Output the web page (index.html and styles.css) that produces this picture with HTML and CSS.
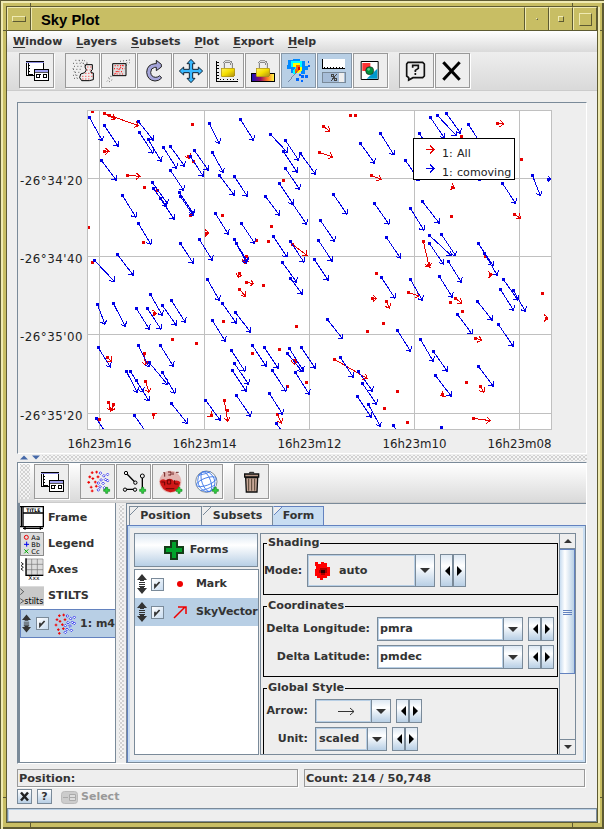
FILE: index.html
```html
<!DOCTYPE html>
<html lang="en">
<head>
<meta charset="utf-8">
<title>Sky Plot</title>
<link rel="stylesheet" href="styles.css">
</head>
<body>
<svg class="defs" width="0" height="0" aria-hidden="true">
  <defs>
    <linearGradient id="gold" x1="0" y1="0" x2="1" y2="1"><stop offset="0" stop-color="#fff36a"/><stop offset=".5" stop-color="#f5df00"/><stop offset="1" stop-color="#a98a18"/></linearGradient>
    <linearGradient id="plasma"><stop offset="0" stop-color="#1010c0"/><stop offset=".4" stop-color="#901060"/><stop offset=".7" stop-color="#ff7a20"/><stop offset="1" stop-color="#ffff50"/></linearGradient>
    <symbol id="windows" viewBox="60 162 99 99">
      <path d="M79 185h51v41H79z" fill="#fff" stroke="#000" stroke-width="3"/>
      <path d="M78 184h54v6H78z" fill="#8f8fe0"/><path d="M78 184h54M85 190v33M85 222h15M85 196h4m-4 9h4m-4 9h4" stroke="#000" stroke-width="3" fill="none"/>
      <path d="M103 208h42v33h-42z" fill="#fff" stroke="#000" stroke-width="4"/>
      <path d="M105 210h39v5h-39z" fill="#a0a0f0"/><path d="M104 216h41" stroke="#000" stroke-width="2"/>
      <path d="M110 224h8v8h-8zM130 224h9v9h-9z" fill="none" stroke="#000" stroke-width="3"/><path d="M120 224h3" stroke="#000" stroke-width="3"/>
    </symbol>
    <symbol id="padlock" viewBox="0 0 48 52">
      <path d="M11 26V14Q11 3 23 3t12 11v12" fill="none" stroke="#888" stroke-width="7"/><path d="M11 26V14Q11 3 23 3t12 11v12" fill="none" stroke="#ddd" stroke-width="3"/>
      <rect x="3" y="23" width="41" height="26" rx="4" fill="url(#gold)" stroke="#a88b20" stroke-width="2"/>
    </symbol>
    <symbol id="scatter" viewBox="0 0 66 66">
      <path d="M5 20h8m-4-4v8M12 8h8m-4-4v8M25 6h8m-4-4v8M2 36h8m-4-4v8M14 25h8m-4-4v8M29 20h8m-4-4v8M9 50h8m-4-4v8M21 35h8m-4-4v8M24 47h8m-4-4v8M12 61h8m-4-4v8" stroke="#f00000" stroke-width="3"/>
      <path d="M40 5l4 4-4 4-4-4zM50 13l4 4-4 4-4-4zM61 9l4 4-4 4-4-4zM42 25l4 4-4 4-4-4zM55 24l4 4-4 4-4-4zM34 34l4 4-4 4-4-4zM48 35l4 4-4 4-4-4zM61 27l4 4-4 4-4-4zM39 45l4 4-4 4-4-4zM52 48l4 4-4 4-4-4zM34 54l4 4-4 4-4-4z" fill="#fff" stroke="#00e" stroke-width="2"/>
    </symbol>
    <symbol id="plus" viewBox="0 0 24 24"><path d="M9 3h6v6h6v6h-6v6H9v-6H3V9h6z" fill="#30d040" stroke="#108820" stroke-width="2"/></symbol>
    <symbol id="updown" viewBox="0 0 10 20"><path d="M5 0l5 6H7v1H3V6H0zM5 20l5-6H7v-1H3v1H0zM2 8h6v1H2zM2 10h6v1H2zM2 12h6v1H2z" fill="#333"/></symbol>
    <symbol id="tick" viewBox="0 0 13 13"><path d="M3.500 5.500v4l5.500-6" fill="none" stroke="#333" stroke-width="2"/></symbol>
  </defs>
</svg>

<div class="window">
  <header class="titlebar">
    <span class="knob menu-knob"><i></i></span>
    <h1>Sky Plot</h1>
    <span class="knob"><i class="dot"></i></span>
    <span class="knob"><i class="small"></i></span>
    <span class="knob last"><i class="large"></i></span>
  </header>
  <main class="client">
    <nav class="menubar">
      <span><u>W</u>indow</span><span><u>L</u>ayers</span><span><u>S</u>ubsets</span><span><u>P</u>lot</span><span><u>E</u>xport</span><span><u>H</u>elp</span>
    </nav>
    <div class="toolbar">
      <button class="tool"><svg><use href="#windows"/></svg></button>
      <button class="tool gap"><svg class="fine" viewBox="198 162 99 99">
        <path d="M226 181h30M219 190h45M222 199h24M219 208h24M225 217h15M219 226h15M222 235h12M237 181l18 15M252 181l12 9M219 205l12 30" stroke="#444" stroke-width="2.500" stroke-dasharray="3 7" fill="none"/>
        <path d="M257 194h20v15l-4 4v5l7 1v20l-12 3h-23l-6-9 3-11 12-4 5-8-4-9z" fill="#eee" stroke="#000" stroke-width="3"/>
        <path d="M262 201h12M260 210h12M256 220h20M247 229h30M247 237h27" stroke="#f22" stroke-width="3" stroke-dasharray="3 6"/></svg></button>
      <button class="tool"><svg class="fine" viewBox="306 162 99 99">
        <path d="M321 244l24-24M324 235l18-15M360 184l30-4M370 190l20-2M378 196l9-3M327 246l12-9" stroke="#444" stroke-width="2.500" stroke-dasharray="3 6"/><path d="M338 191h40v36h-40z" fill="#ddd" stroke="#000" stroke-width="3"/>
        <path d="M344 197h30M342 206h33M347 215h24M342 222h27M368 195l-22 27" stroke="#f22" stroke-width="3.500" stroke-dasharray="3 5"/></svg></button>
      <button class="tool"><svg class="fine" viewBox="414 162 99 99"><path d="M469 181l15 12v8l-15 11v-10h-5q-12 2-12 15 1 14 15 15 7 0 12-5l6 7q-8 9-20 9-23-2-25-26 1-24 25-26h4z" fill="#a5a5da" stroke="#222" stroke-width="3"/></svg></button>
      <button class="tool"><svg class="fine" viewBox="522 162 99 99"><path d="M573 178l12 13h-7v17h17v-7l13 12-13 12v-7h-17v17h7l-12 13-12-13h7v-17h-17v7l-13-12 13-12v7h17v-17h-7z" fill="#39b9ff" stroke="#123" stroke-width="3"/></svg></button>
      <button class="tool"><svg viewBox="630 162 99 99"><path d="M650 183v61M648 243h66" stroke="#000" stroke-width="3"/><path d="M653 185v54" stroke="#000" stroke-width="5" stroke-dasharray="3 7"/><path d="M660 239h54" stroke="#000" stroke-width="4" stroke-dasharray="3 7"/><use href="#padlock" x="660" y="181" width="48" height="52"/></svg></button>
      <button class="tool"><svg viewBox="738 162 99 99"><path d="M754 220h69v24h-69z" fill="url(#plasma)" stroke="#000" stroke-width="3"/><use href="#padlock" x="765" y="181" width="48" height="52"/></svg></button>
      <button class="tool on"><svg viewBox="846 162 99 99"><path d="M864 181h15v-3h21v6h15v15h9v12h-8v12h-12v-9h-13l-18 6v-12h-12z" fill="#08f"/><path d="M873 184h33v21l-12 14-14 4v-12l6-9h-13z" fill="#0ff"/><path d="M880 189h20v11h7v12l-14 8-5-7 4-12h-12z" fill="#ff0"/><path d="M888 194h13v15l-10 9h-7v-8l6-5z" fill="#f60"/><path d="M893 200h8v9h-8z" fill="#d00"/><path d="M891 214l-27 33M903 225h9v9h-9zM888 234h9v9h-9zM914 226h9v9h-9zM897 222h6v6h-6zM903 240h6v6h-6zM924 195h6v6h-6zM924 183h4v6h-4z" fill="#06f"/><path d="M891 214l-27 33" stroke="#568" stroke-width="2"/></svg></button>
      <button class="tool on"><svg viewBox="954 162 99 99"><path d="M966 177h70v30h-70z" fill="#fff"/><path d="M967 177v28h69M974 202v3m9-3v3m9-3v3m9-3v3m9-3v3m9-3v3m9-3v3" stroke="#000" stroke-width="3" fill="none"/><path d="M967 217h68v31h-68z" fill="#a6bdd8" stroke="#7a8a99" stroke-width="3"/><path d="M1016 219h17v27h-17z" fill="#eee"/><path d="M1011 222l-19 22" stroke="#444" stroke-width="3"/><path d="M993 223h6v6h-6zM1004 236h6v6h-6z" fill="none" stroke="#444" stroke-width="3"/></svg></button>
      <button class="tool"><svg class="fine" viewBox="1062 162 99 99"><path d="M1083.500 184.500h51v54h-51z" fill="#fff" stroke="#000" stroke-width="3"/><path d="M1087 189h24v24h-24z" fill="#f33"/><path d="M1132 206v30h-32z" fill="#09c"/><circle cx="1109" cy="212" r="12" fill="#00913b" stroke="#222" stroke-width="2"/><circle cx="1106" cy="208" r="4" fill="#6c8"/></svg></button>
      <button class="tool gap2"><svg class="fine" viewBox="1200 162 99 99"><path d="M1224 187h44l5 5v36l-5 5h-29l-13 7v-7l-6-5v-36z" fill="#eee" stroke="#111" stroke-width="5"/><path d="M1238 203v-7h17v9l-9 6v5M1246 219v6" fill="none" stroke="#111" stroke-width="5"/></svg></button>
      <button class="tool"><svg class="fine" viewBox="1308 162 99 99"><path d="M1333 190l43 46M1376 190l-43 46" stroke="#000" stroke-width="9" stroke-linecap="square"/></svg></button>
    </div>

    <section class="plot">
      <svg id="sky" width="569" height="350" viewBox="18 103 569 350">
        <rect x="87" y="110" width="465" height="320" fill="#fff"/>
        <g id="grid"></g>
        <clipPath id="frame"><rect x="88" y="111" width="463" height="318"/></clipPath>
        <g id="vectors" clip-path="url(#frame)"></g>
        <g class="axis end"><text x="83" y="185">-26°34'20</text><text x="83" y="263">-26°34'40</text><text x="83" y="341">-26°35'00</text><text x="83" y="420">-26°35'20</text></g>
        <g class="axis mid"><text x="99.500" y="448">16h23m16</text><text x="204.500" y="448">16h23m14</text><text x="309.500" y="448">16h23m12</text><text x="414.500" y="448">16h23m10</text><text x="519.500" y="448">16h23m08</text></g>
        <g class="legend">
          <rect x="413.500" y="138.500" width="101" height="41" fill="#fff" stroke="#000"/>
          <path class="all" d="M426 149.500h8m-4-4l4 4-4 4"/><path class="co" d="M426 168.500h8m-4-4l4 4-4 4"/>
          <text x="442" y="157">1:</text><text x="457" y="157">All</text><text x="442" y="176">1:</text><text x="457" y="176">comoving</text>
        </g>
      </svg>
    </section>

    <div class="divider"><svg width="20" height="5" viewBox="0 0 20 5"><path d="M0 4.500l4-4 4 4zM12 .5h8l-4 4z" fill="#4568a8"/></svg><i class="bumps"></i></div>

    <section class="lower">
      <div class="toolbar second">
        <i class="bumps grip"></i>
        <button class="tool"><svg><use href="#windows"/></svg></button>
        <button class="tool gap"><svg class="fine" viewBox="243 105 99 99"><use href="#scatter" x="260" y="120" width="68" height="68"/><use href="#plus" x="308" y="169" width="24" height="24"/></svg></button>
        <button class="tool"><svg class="fine" viewBox="351 105 99 99"><path d="M378 129l27 28M427 140v36M377 178h27" stroke="#000" stroke-width="4"/><g fill="#eee" stroke="#000" stroke-width="3"><circle cx="378" cy="129" r="5"/><circle cx="406" cy="158" r="5"/><circle cx="427" cy="138" r="6"/><circle cx="375" cy="179" r="5"/><circle cx="405" cy="179" r="5"/></g><use href="#plus" x="416" y="169" width="24" height="24"/></svg></button>
        <button class="tool"><svg class="fine" viewBox="459 105 99 99"><circle cx="511" cy="155" r="33" fill="#e3b4b0"/><path d="M479 154q8-10 18-3 14-10 25 2 12-5 19 4-4 29-30 30-27-5-32-33z" fill="#d01818"/><path d="M490 128h4v12m10-14h9v9h-8m14-8v8m9-8h8M484 156h10v10m8-16h10v12h-10zM524 150v12h11M497 176h26" stroke="#500" fill="none" stroke-width="2.500"/><use href="#plus" x="525" y="169" width="24" height="24"/></svg></button>
        <button class="tool"><svg class="fine" viewBox="567 105 99 99"><circle cx="619" cy="155" r="32" fill="#fff" stroke="#678" stroke-width="2.500"/><g fill="none" stroke="#3b75e8" stroke-width="2.500"><ellipse cx="619" cy="155" rx="13" ry="31" transform="rotate(-20 619 155)"/><ellipse cx="619" cy="155" rx="25" ry="31" transform="rotate(-20 619 155)"/><ellipse cx="619" cy="155" rx="31" ry="11" transform="rotate(-20 619 155)"/><path d="M595 136q22-4 37-11M602 182q22-4 43-17"/></g><use href="#plus" x="634" y="169" width="24" height="24"/></svg></button>
        <button class="tool gap"><svg class="fine" viewBox="705 105 99 99"><path d="M734 132h42v9h-42z" fill="#b49584" stroke="#111" stroke-width="4"/><path d="M749 130v-3h12v3" fill="none" stroke="#111" stroke-width="3"/><path d="M737 143h36l-2 43h-32z" fill="#c6a797" stroke="#111" stroke-width="4"/><path d="M746 146v36m9-36v36m9-36v36" stroke="#543" stroke-width="3"/></svg></button>
      </div>
      <div class="workspace">
        <ul class="layers">
          <li><svg width="24" height="24" viewBox="0 0 72 72"><path d="M9 2h61v60H9zM9 21h61M4 2v60M0 2h9M0 62h9M9 67h60M15 64v7m46-7v7" fill="#fff" stroke="#000" stroke-width="4"/><text x="40" y="17" class="tiny-title">TITLE</text></svg>Frame</li>
          <li><svg width="24" height="24" viewBox="0 0 72 72"><path d="M1 1h70v70H1z" fill="#ddd" stroke="#777" stroke-width="3"/><circle cx="19" cy="16" r="6" fill="none" stroke="#e00" stroke-width="3"/><path d="M12 37h15m-7-8v15" stroke="#00e" stroke-width="3"/><path d="M13 52l12 12m0-12L13 64" stroke="#0a0" stroke-width="3"/><g class="tiny"><text x="34" y="24">Aa</text><text x="34" y="45">Bb</text><text x="34" y="66">Cc</text></g></svg>Legend</li>
          <li><svg width="24" height="24" viewBox="0 0 72 72"><path d="M20 4h48v46H20z" fill="#ddd"/><path d="M19 3v48h50V3zM19 19h50M19 35h50M35 3v48M52 3v48" fill="none" stroke="#777" stroke-width="2"/><path d="M18 1v51h52" fill="none" stroke="#000" stroke-width="4"/><path d="M3 13l7 5-7 5 7 5-7 5 7 5" stroke="#222" stroke-width="3" fill="none"/><text x="25" y="67" class="tiny xs">Xxx</text></svg>Axes</li>
          <li><svg width="24" height="24" viewBox="0 0 72 72"><path d="M0 7h72v58H0z" fill="#c9c9c9"/><path d="M1 14l10 9-10 9M1 44l10 7-10 7" stroke="#222" stroke-width="2" fill="none"/><text x="13" y="59" class="stilts">stilts</text></svg>STILTS</li>
          <li class="sel"><svg width="9" height="19"><use href="#updown"/></svg><span class="check"><svg><use href="#tick"/></svg></span><svg width="22" height="22"><use href="#scatter"/></svg><span>1: m4</span></li>
        </ul>
        <div class="vdivider"><i class="bumps"></i></div>
        <div class="tabs">
          <div class="tabstrip"><span class="tab t1">Position</span><span class="tab t2">Subsets</span><span class="tab t3 active">Form</span></div>
          <div class="pane">
            <div class="forms">
              <button class="add"><svg width="20" height="20" viewBox="0 0 20 20"><path d="M7 1h6v6h6v6h-6v6H7v-6H1V7h6z" fill="#00a32a" stroke="#143d18" stroke-width="2"/></svg>Forms</button>
              <ul class="formlist">
                <li><svg width="10" height="20"><use href="#updown"/></svg><span class="check"><svg><use href="#tick"/></svg></span><svg width="14" height="14" viewBox="0 0 14 14"><circle cx="7" cy="7" r="3" fill="#e00"/></svg><b>Mark</b></li>
                <li class="sel"><svg width="10" height="20"><use href="#updown"/></svg><span class="check"><svg><use href="#tick"/></svg></span><svg width="14" height="14" viewBox="0 0 14 14"><path d="M1 13L12 2M5 2h8v7" fill="none" stroke="#e00" stroke-width="1.500"/></svg><b>SkyVector</b></li>
              </ul>
            </div>
            <div class="scroll">
              <div class="groups">
                <fieldset class="shading"><legend>Shading</legend>
                  <div class="row"><label>Mode:</label><span class="combo tall" id="mode"><em><svg width="16" height="20" viewBox="0 0 16 20"><path d="M0 1h3v2h3V1h3v1h3v4h3v9h-3v2H8v2H5v-2H2v-2H0V8h1V5H0z" fill="#f00"/><path d="M5 7h7v5h-2v2H6v-2H4V9h1z" fill="#a00"/><path d="M6 9h4v3H6z" fill="#300"/></svg>auto</em></span><span class="spin tall"></span></div>
                </fieldset>
                <fieldset class="coords"><legend>Coordinates</legend>
                  <div class="row"><label>Delta Longitude:</label><span class="combo edit"><em>pmra</em></span><span class="spin"></span></div>
                  <div class="row"><label>Delta Latitude:</label><span class="combo edit"><em>pmdec</em></span><span class="spin"></span></div>
                </fieldset>
                <fieldset class="global"><legend>Global Style</legend>
                  <div class="row"><label>Arrow:</label><span class="combo arrow"><em><svg width="17" height="9" viewBox="0 0 17 9"><path d="M0 4.500h16M12 1l4 3.500L12 8" fill="none" stroke="#333"/></svg></em></span><span class="spin"></span></div>
                  <div class="row"><label>Unit:</label><span class="combo unit"><em>scaled</em></span><span class="spin"></span></div>
                </fieldset>
              </div>
              <div class="bar"><i class="cap up"></i><i class="thumb"></i><i class="track"></i><i class="cap down"></i></div>
            </div>
          </div>
        </div>
      </div>
    </section>

    <div class="status"><span>Position:</span><span>Count: 214 / 50,748</span></div>
    <div class="actions">
      <button><svg width="13" height="13" viewBox="0 0 13 13"><path d="M3 2.500l7 8M10 2.500l-7 8" stroke="#222" stroke-width="2.500"/></svg></button>
      <button>?</button>
      <span class="select"><svg width="17" height="13" viewBox="0 0 17 13"><rect x=".5" y=".5" width="16" height="12" rx="3" fill="#ccc" stroke="#bbb"/><path d="M2 6.500h5M8.500 3.500h6v6h-6zM8 6.500h6" stroke="#aaa" fill="#ddd"/></svg>Select</span>
    </div>
    <div class="progress"></div>
  </main>
</div>
<script src="plot.js"></script>
</body>
</html>
```
FILE: styles.css
```css
* { box-sizing: border-box; }
body { margin: 0; background: #5d5a32; color: #333; font: bold 11px/14px "DejaVu Sans", sans-serif; }
button { font: inherit; color: inherit; padding: 0; margin: 0; border-radius: 0; }
ul { list-style: none; margin: 0; padding: 0; }
svg { display: block; flex: none; }
.defs { position: absolute; }

.window {
  width: 604px; height: 829px; padding: 7px;
  background:
    linear-gradient(#5d5a32, #5d5a32) 30px 0/1px 6px no-repeat,
    linear-gradient(#5d5a32, #5d5a32) 572px 0/1px 6px no-repeat,
    linear-gradient(#5d5a32, #5d5a32) 0 30px/6px 1px no-repeat,
    linear-gradient(#5d5a32, #5d5a32) 598px 30px/5px 1px no-repeat,
    linear-gradient(#5d5a32, #5d5a32) 0 797px/6px 1px no-repeat,
    linear-gradient(#5d5a32, #5d5a32) 598px 797px/5px 1px no-repeat,
    linear-gradient(#5d5a32, #5d5a32) 30px 823px/1px 5px no-repeat,
    linear-gradient(#5d5a32, #5d5a32) 572px 823px/1px 5px no-repeat,
    #c8be64;
  box-shadow: inset 1px 1px #5d5a32, inset 3px 3px #efeab2, inset -2px -2px #5d5a32;
}
.titlebar { display: flex; width: 590px; height: 24px; background: #c8be64; box-shadow: 0 0 0 1px #5d5a32; position: relative; }
.titlebar::before { content: ""; position: absolute; inset: 0 -3px -792px 0; border: solid #efeab2; border-width: 0 2px 2px 0; pointer-events: none; }
.knob { width: 24px; height: 24px; display: flex; align-items: center; justify-content: center; border: 1px solid; border-color: #efeab2 #5d5a32 #5d5a32 #efeab2; }
.knob i { width: 13px; height: 13px; border: 1px solid; border-color: #efeab2 #5d5a32 #5d5a32 #efeab2; }
.menu-knob i { height: 6px; width: 14px; }
.knob i.dot { width: 2px; height: 2px; }
.knob i.small { width: 6px; height: 6px; }
.titlebar h1 { flex: 1; margin: 0; padding-left: 9px; border: 1px solid; border-color: #efeab2 #5d5a32 #5d5a32 #efeab2; font: bold 14.8px/24px "Liberation Sans", sans-serif; color: #000; }

.client { position: relative; width: 590px; height: 791px; background: #eee; box-shadow: 0 0 0 1px #5d5a32; display: flex; flex-direction: column; }
.menubar { display: flex; flex: none; gap: 14px; height: 21px; padding: 4px 0 0 6px; background: linear-gradient(#fff, #dadada); }
.menubar u { text-underline-offset: 2px; }
.toolbar { display: flex; flex: none; gap: 1px; height: 39px; padding: 1px 0 0 12px; background: linear-gradient(#eee, #dadada 96%); border-bottom: 1px solid #ccc; }
.tool { width: 35px; height: 35px; flex: none; border: 1px solid #999; background: #eee; box-shadow: 1px 1px #fff; }
.tool svg { width: 33px; height: 33px; shape-rendering: crispEdges; }
.tool svg.fine { shape-rendering: auto; }
.tool.gap, .tool.gap2 { margin-left: 10px; }
.tool.on { background: #b8cfe5; border-color: #8797a7; }

.plot { flex: none; margin: 11px 10px 0; width: 570px; height: 352px; border: 1px solid #7a8a99; border-right-color: #fff; border-bottom-color: #fff; }
#sky { shape-rendering: crispEdges; }
#grid path { stroke: #c0c0c0; fill: none; }
#vectors .v, .all, .co { fill: none; }
.all, #vectors .v.r { stroke: #e60000; }
.co, #vectors .v.b { stroke: #0000e6; }
#vectors rect.r { fill: #e60000; }
#vectors rect.b { fill: #0000e6; }
.axis, .legend text { font-weight: normal; fill: #222; }
.axis { font-size: 11.8px; }
.legend text { font-size: 11.1px; }
.end { text-anchor: end; letter-spacing: .5px; }
.mid { text-anchor: middle; }

.bumps { display: block; background: radial-gradient(circle, #aaa .6px, transparent .8px) 0 0/4px 4px, radial-gradient(circle, #aaa .6px, transparent .8px) 2px 2px/4px 4px, #f4f4f4; }
.divider { display: flex; flex: none; height: 8px; margin: 0 10px; padding: 1px 0 0 3px; gap: 2px; }
.divider .bumps { flex: 1; height: 6px; }

.lower { flex: none; margin: 0 10px 0; width: 570px; height: 302px; border: 1px solid #7a8a99; border-right-color: #fff; border-bottom-color: #fff; }
.toolbar.second { height: 40px; padding: 1px 0 0 2px; background: linear-gradient(#fff, #dadada); }
.grip { width: 10px; height: 35px; margin-right: 3px; }
.workspace { display: flex; height: 260px; }
.layers { width: 98px; height: 260px; background: #fff; border-left: 2px solid #7a8a99; border-right: 1px solid #7a8a99; border-bottom: 1px solid #7a8a99; padding-top: 2px; overflow: hidden; }
.layers li { display: flex; align-items: center; height: 26px; gap: 4px; font-size: 11.2px; white-space: nowrap; }
.layers li.sel { height: 29px; background: #b8cfe5; border: 1px solid #6382bf; border-right: 0; padding-left: 1px; font-size: 11px; }
.tiny-title { font-size: 14px; text-anchor: middle; fill: #000; }
.tiny { font-size: 20px; font-weight: normal; fill: #000; }
.tiny.xs { font-size: 18px; }
.stilts { font-size: 24px; font-weight: normal; fill: #000; }
.check { width: 13px; height: 13px; flex: none; border: 1px solid #7a8a99; background: linear-gradient(135deg, #fff, #c8dcf0); }
.check svg { width: 11px; height: 11px; }
.layers .check { margin-left: 1px; }
.layers .check + svg { margin-left: 1px; }
.vdivider { width: 10px; padding: 2px 2px 4px 3px; }
.vdivider .bumps { height: 254px; }
.tabs { flex: 1; height: 260px; border-left: 1px solid #7a8a99; border-top: 1px solid #7a8a99; }
.tabstrip { display: flex; height: 21px; padding: 2px 0 0 2px; }
.tab { height: 19px; padding: 1px 0 0; text-align: center; font-size: 11px; line-height: 16px; background: linear-gradient(135deg, #eee 5px, #7a8a99 5px, #7a8a99 6px, transparent 6px); border: 1px solid #7a8a99; border-bottom: 0; border-left-color: transparent; }
.t1 { width: 73px; border-left-color: #7a8a99; }
.t2 { width: 71px; }
.t3 { width: 51px; }
.tab.active { background: linear-gradient(135deg, #eee 5px, #6382bf 5px, #6382bf 6px, #c8ddf2 6px); border-color: #6382bf #6382bf #c8ddf2 #c8ddf2; }
.pane { display: flex; gap: 1px; height: 238px; padding: 5px 5px 6px 6px; border: 1px solid #6382bf; border-right-color: #7a8a99; border-bottom-color: #7a8a99; box-shadow: inset 0 0 0 2px #c8ddf2; }
.forms { width: 125px; flex: none; padding-top: 2px; }
.add { width: 124px; height: 34px; display: flex; align-items: center; justify-content: center; gap: 6px; border: 1px solid #7a8a99; background: linear-gradient(#dde8f3, #fff 35%, #b8cfe5); font-size: 11.2px; }
.formlist { margin-top: 2px; width: 125px; height: 186px; background: #fff; border: 1px solid #7a8a99; }
.formlist li { display: flex; align-items: center; height: 28px; padding-left: 2px; font-size: 11px; white-space: nowrap; overflow: hidden; }
.formlist .check { margin: 0 9px 0 4px; }
.formlist b { margin-left: 9px; letter-spacing: -.1px; }
.sel { background: #b8cfe5; }
.scroll { display: flex; width: 316px; height: 222px; margin-top: 2px; border: 1px solid #7a8a99; overflow: hidden; }
.groups { width: 298px; height: 220px; overflow: hidden; flex: none; padding: 2px 1px 0 2px; }
fieldset { margin: 0; min-width: 0; width: 295px; border: 1px solid #000; padding: 0; }
legend { padding: 0 1px; margin-left: 3px; height: 14px; line-height: 14px; font-size: 11.2px; }
.shading { height: 59px; }
.coords { height: 78px; margin-top: 4px; }
.global { height: 80px; margin-top: 4px; }
.row { display: flex; align-items: center; height: 24px; margin-bottom: 4px; }
.shading .row { height: 33px; margin-top: 4px; }
.coords .row:first-of-type, .global .row:first-of-type { margin-top: 4px; }
.row label { text-align: right; padding-right: 7px; white-space: nowrap; }
.shading label { width: 43px; padding-right: 6px; }
.coords label { width: 113px; }
.global label { width: 51px; }
.combo { height: 24px; flex: none; border: 1px solid #7a8a99; background: linear-gradient(#dde8f3, #fff 35%, #b8cfe5); display: flex; }
.combo em { font-style: normal; display: flex; align-items: center; height: 100%; width: calc(100% - 19px); border: 1px solid #b8cfe5; background: #eee; box-shadow: 1px 0 #7a8a99; padding-left: 2px; font-size: 11.2px; }
.combo::after { content: ""; margin: auto; border: solid transparent; border-width: 5px 5px 0; border-top-color: #333; }
.edit { width: 146px; }
.edit em { background: #fff; padding-left: 1px; }
#mode { width: 128px; }
#mode em { padding-left: 6px; gap: 8px; }
.arrow { width: 76px; }
.arrow em { padding-left: 21px; }
.unit { width: 72px; }
.tall { height: 33px !important; }
.spin { display: flex; justify-content: space-around; align-items: center; width: 26px; height: 24px; margin-left: 5px; border: 1px solid #7a8a99; background: linear-gradient(90deg, transparent 11px, #7a8a99 11px, #7a8a99 13px, transparent 13px), linear-gradient(#dde8f3, #fff 35%, #b8cfe5); }
.spin::before, .spin::after { content: ""; border: solid transparent; border-width: 5px 5px 5px 0; border-right-color: #000; }
.spin::after { border-width: 5px 0 5px 5px; border-left-color: #000; }
.bar { width: 16px; height: 220px; border-left: 1px solid #7a8a99; display: flex; flex-direction: column; }
.cap { height: 15px; display: flex; background: #eee; border-bottom: 1px solid #7a8a99; }
.cap::after { content: ""; margin: auto; border: solid transparent; border-width: 0 4px 4px; border-bottom-color: #333; }
.cap.down { border: 0; border-top: 1px solid #7a8a99; }
.cap.down::after { border-width: 4px 4px 0; border-top-color: #333; }
.thumb { height: 125px; border: 1px solid #6382bf; border-left: 0; background: linear-gradient(#6382bf, #6382bf) 3px 60px/9px 1px no-repeat, linear-gradient(#6382bf, #6382bf) 3px 62px/9px 1px no-repeat, linear-gradient(#6382bf, #6382bf) 3px 64px/9px 1px no-repeat, linear-gradient(90deg, #c8dcf0, #fff 35%, #b8cfe5); }
.track { flex: 1; }

.status { display: flex; flex: none; gap: 6px; margin: 5px 10px 0; height: 18px; }
.status span { width: 281px; border: 1px solid #999; box-shadow: 1px 1px #fff; padding: 1px 0 0 1px; font-size: 11.3px; line-height: 15px; }
.actions { display: flex; flex: none; margin: 2px 10px 0; height: 15px; align-items: center; gap: 5px; }
.actions button { width: 15px; height: 15px; border: 1px solid #7a8a99; background: linear-gradient(#fff, #b8cfe5); line-height: 13px; }
.select { display: flex; align-items: center; gap: 3px; margin-left: 4px; padding-top: 1px; color: #999; font-size: 11px; }
.progress { flex: none; height: 14px; margin-top: 4px; border: 1px solid #7a8a99; box-shadow: inset 1px 1px #b8cfe5; }
```
FILE: plot.js
```js
// Sky vectors, stored per tile in thirds of a pixel: [x1, y1, x2, y2]; [x, y] is a bare point.
const tiles = [
  { at: [80, 100],
    b: [[28,52,67,122],[73,76,115,139],[64,181,109,241],[175,64,220,121],[178,97,219,160],[205,119,244,184],[250,142,290,205],[271,139,314,199],[331,169,370,229],[343,151,385,211],[271,211,311,271],[217,247,263,312],[220,265,260,320],[241,295,283,358],[298,277,341,342],[301,289,341,348],[127,286,168,352],[175,370,213,433],[301,430,340,490],[358,418,397,481],[112,463,160,526],[43,481,103,544],[388,70,418,130],[397,157,430,217],[418,226,463,286],[406,340,445,403]],
    r: [[88,46,175,77],[73,40,106,57],[73,154,87,154],[142,226,180,229],[37,33],[193,262],[337,73],[325,169,328,175],[340,184],[331,346],[232,271],[190,427],[427,346],[25,382],[37,487],[379,399,387,399]] },
  { at: [230, 100],
    b: [[31,58,71,121],[121,103,172,157],[166,121,206,181],[160,154,202,217],[211,160,257,223],[166,205,209,268],[13,229,52,289],[148,250,189,312],[187,310,230,373],[106,289,149,346],[34,370,74,430],[13,418,50,490],[19,430,53,485],[130,409,171,471],[181,424,222,487],[157,487,200,547],[253,478,295,541],[271,361,314,424],[265,421,307,484],[310,283,351,343],[391,130,434,190],[451,100,492,165],[433,310,477,373],[469,412,511,474],[181,535,217,583]],
    r: [[361,46],[376,46],[160,241],[124,379],[115,424],[79,421],[280,79,299,94],[268,157,308,171],[424,226,453,238],[187,433,231,466],[49,470,43,492]] },
  { at: [390, 100],
    b: [[121,52,163,114],[142,46,199,107],[169,40,212,100],[235,73,275,135],[88,100,130,165],[46,181,89,243],[268,238],[337,250,377,310],[427,226,451,287],[475,237,484,237],[97,304,148,370],[61,325,102,391],[118,406,184,467],[154,403,197,467],[118,430,160,492],[265,430,309,497],[283,460,322,526],[175,484,214,547]],
    r: [[322,70,341,72],[214,109],[394,178],[184,349],[188,262,194,264],[373,343,392,355],[100,424,118,502],[286,468]] },
  { at: [80, 265],
    b: [[52,118,75,178],[100,115,136,184],[211,88,247,151],[169,130,208,193],[202,130,243,193],[247,121,289,181],[274,106,316,172],[382,43,418,106],[427,115,469,175],[397,166,436,229],[54,247,91,306],[175,241,207,305],[241,241,280,304],[208,293,262,358],[247,322,285,385],[139,319,172,382],[151,319,190,381],[169,346,207,408],[274,415,322,475],[377,406,421,466],[49,460,91,523],[163,451,205,511]],
    r: [[223,145,229,145],[277,223],[349,235],[430,169],[82,277,95,289],[193,266,196,300],[196,349,207,382],[85,412,95,438],[100,418,92,438],[58,463],[220,448,217,446],[393,451,396,454],[433,406,443,468],[442,436],[477,73]] },
  { at: [230, 265],
    b: [[16,142,62,202],[4,256,45,319],[13,295,56,358],[7,316,49,379],[19,391,62,454],[67,241,109,304],[103,247,145,310],[178,250,220,318],[172,265,217,320],[214,247,256,310],[196,322,238,388],[127,316,168,379],[118,385,158,448],[139,475,181,535],[292,163,338,222],[331,277,370,337],[385,319,428,379],[397,355,440,418],[382,394,424,457],[415,418,451,484],[454,37,495,100]],
    r: [[28,25,25,38],[49,52,71,56],[28,73,47,94],[100,61],[199,184],[67,265],[148,253],[172,364],[229,352],[142,448,154,474],[193,286,193,298],[439,25],[427,100,440,100],[469,109,478,130],[460,175],[412,199],[463,430],[313,283,411,340]] },
  { at: [390, 265],
    b: [[61,43,97,106],[148,34,187,97],[22,196,62,259],[91,223,130,289],[130,259,172,319],[136,331,184,394],[202,148,246,207],[262,109,307,166],[325,178,370,244],[331,73,371,136],[340,43,384,106],[370,76,406,139],[265,304,310,364],[10,481,52,541],[154,487]],
    r: [[55,82,88,93],[181,112],[196,100,215,115],[217,139],[115,1,120,6],[300,29,306,29],[256,220,275,225],[457,85],[469,159,474,159],[22,379],[229,352],[271,364,282,382],[157,389,152,391],[52,472],[250,460,301,467]] }
];

let grid = 'M87.5 110.5H551.5V429.5H87.5Z';
for (const x of [99.5, 204.5, 309.5, 414.5, 519.5]) grid += `M${x} 110V430`;
for (const y of [178.5, 256.5, 334.5, 413.5]) grid += `M87 ${y}H552`;
document.getElementById('grid').innerHTML = `<path d="${grid}"/>`;

let out = '';
for (const c of ['r', 'b']) {
  for (const t of tiles) {
    for (const [a, b, p, q] of t[c]) {
      const x = t.at[0] + a / 3, y = t.at[1] + b / 3;
      out += `<rect class="${c}" x="${Math.floor(x) - 1}" y="${Math.floor(y) - 1}" width="3" height="3"/>`;
      if (p === undefined) continue;
      const u = t.at[0] + p / 3, v = t.at[1] + q / 3;
      const ang = Math.atan2(v - y, u - x);
      const barb = s => `${(u - 5 * Math.cos(ang + s)).toFixed(1)} ${(v - 5 * Math.sin(ang + s)).toFixed(1)}`;
      out += `<path class="v ${c}" d="M${x} ${y}L${u} ${v}M${barb(0.72)}L${u} ${v}L${barb(-0.72)}"/>`;
    }
  }
}
document.getElementById('vectors').innerHTML = out;
```
